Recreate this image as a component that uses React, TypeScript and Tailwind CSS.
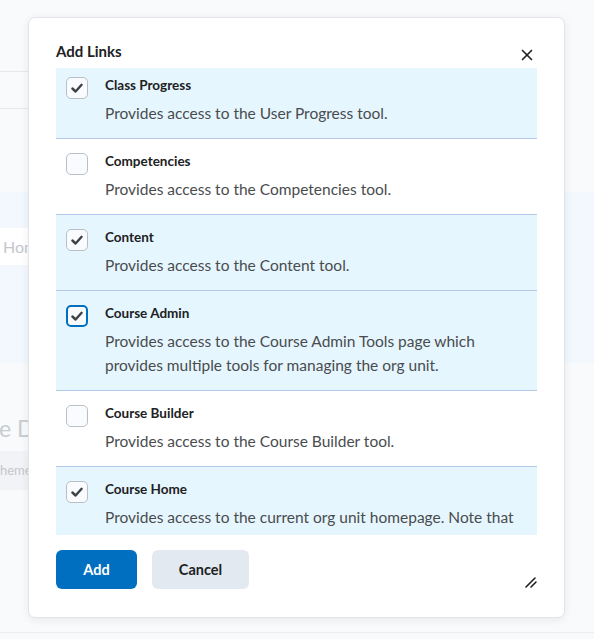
import { X } from 'lucide-react';

type LinkItem = {
  title: string;
  description: string;
  checked: boolean;
  focused?: boolean;
};

const links: LinkItem[] = [
  {
    title: 'Class Progress',
    description: 'Provides access to the User Progress tool.',
    checked: true,
  },
  {
    title: 'Competencies',
    description: 'Provides access to the Competencies tool.',
    checked: false,
  },
  {
    title: 'Content',
    description: 'Provides access to the Content tool.',
    checked: true,
  },
  {
    title: 'Course Admin',
    description:
      'Provides access to the Course Admin Tools page which provides multiple tools for managing the org unit.',
    checked: true,
    focused: true,
  },
  {
    title: 'Course Builder',
    description: 'Provides access to the Course Builder tool.',
    checked: false,
  },
  {
    title: 'Course Home',
    description: 'Provides access to the current org unit homepage. Note that',
    checked: true,
  },
];

const Checkbox = ({ checked, focused }: { checked: boolean; focused?: boolean }) => (
  <div
    className={
      focused
        ? 'size-[22px] shrink-0 rounded-[5px] border-2 border-[#006fbf] bg-[#f9fbff] flex items-center justify-center'
        : 'size-[22px] shrink-0 rounded-[5px] border border-[#b9bfc6] bg-[#f9fbff] flex items-center justify-center'
    }
  >
    {checked && (
      <svg width="14" height="14" viewBox="0 0 14 14" fill="none">
        <path
          d="M2.4 7.5 L5.6 10.5 L11.6 3.8"
          stroke="#3f4244"
          strokeWidth="2.4"
          strokeLinecap="round"
          strokeLinejoin="round"
        />
      </svg>
    )}
  </div>
);

const LinkRow = ({ item }: { item: LinkItem }) => (
  <div
    className={
      item.checked
        ? 'flex gap-[17px] pl-[10px] pr-3 pt-[14px] pb-[13px] border-b border-[#b3c7e6] bg-[#e6f6fe]'
        : 'flex gap-[17px] pl-[10px] pr-3 pt-[14px] pb-[13px] border-b border-[#b3c7e6] bg-white'
    }
  >
    <Checkbox checked={item.checked} focused={item.focused} />
    <div className="flex flex-col gap-2">
      <div className="text-[13.5px] leading-4 font-bold text-[#202122]">{item.title}</div>
      <div className="text-[15.5px] leading-6 text-[#494c4e]">{item.description}</div>
    </div>
  </div>
);

export default function App() {
  return (
    <div
      className="relative w-[594px] h-[639px] overflow-hidden bg-[#f9fafb]"
      style={{ fontFamily: 'Lato, "Noto Sans", sans-serif' }}
    >
      {/* page behind the dialog */}
      <div className="flex flex-col">
        <div className="h-[71px]" />
        <div className="h-[38px] w-[300px] border-y border-[#e5e7ea]" />
        <div className="h-[83px]" />
        <div className="h-[171px] bg-[#f2f8fd] pt-[36px]">
          <div className="h-[37px] w-[300px] bg-white flex items-center pl-[3px] text-[16px] text-[#c3c7cc]">
            Home
          </div>
        </div>
        <div className="mt-[51px] h-[28px] leading-7 text-[23px] text-[#c8ccd1] -ml-px whitespace-nowrap">
          e Dates
        </div>
        <div className="mt-[9px] h-[39px] w-[200px] bg-[#f1f3f6] flex items-center text-[13px] text-[#c3c7cc]">
          heme
        </div>
        <div className="mt-[142px] h-px bg-[#eceef1]" />
      </div>

      {/* dialog */}
      <div className="absolute left-[28px] top-[17px] w-[537px] h-[601px] rounded-[7px] border border-[#e1e4e8] bg-white shadow-[0_2px_10px_rgba(0,0,0,0.07)] flex flex-col px-[27px]">
        <div className="flex justify-between items-start pt-[23px]">
          <h2 className="text-[15px] leading-5 font-bold text-[#202122]">Add Links</h2>
          <button className="mt-1 size-5 flex items-center justify-center text-[#202122]">
            <X size={18} strokeWidth={2.2} />
          </button>
        </div>
        <div className="mt-[3px] h-[467px] overflow-hidden">
          <div className="-mt-[5px]">
            {links.map((item) => (
              <LinkRow key={item.title} item={item} />
            ))}
          </div>
        </div>
        <div className="flex gap-[15px] mt-[15px]">
          <button className="w-[81px] h-[39px] rounded-[6px] bg-[#006fbf] text-white text-[14.5px] font-bold">
            Add
          </button>
          <button className="w-[97px] h-[39px] rounded-[6px] bg-[#e3e9f1] text-[#202122] text-[14.5px] font-bold">
            Cancel
          </button>
        </div>
        <svg
          className="absolute right-[27px] bottom-[29px]"
          width="12"
          height="12"
          viewBox="0 0 12 12"
          fill="none"
        >
          <path d="M1 11 L10 2 M6 11 L11 6" stroke="#202122" strokeWidth="1.6" strokeLinecap="round" />
        </svg>
      </div>
    </div>
  );
}
